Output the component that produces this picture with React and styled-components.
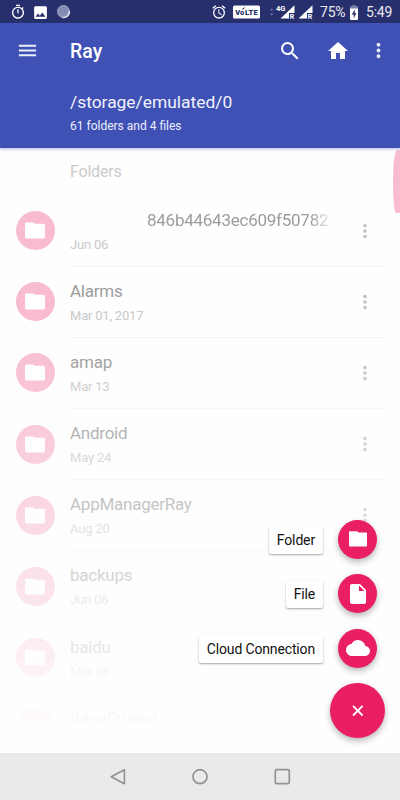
import styled, { createGlobalStyle } from "styled-components";
import {
    MdOutlineTimer,
    MdImage,
    MdOutlineAlarm,
    MdMenu,
    MdSearch,
    MdHome,
    MdMoreVert,
    MdInsertDriveFile,
    MdCloud,
} from "react-icons/md";

const GlobalStyle = createGlobalStyle`
    * {
        box-sizing: border-box;
    }
    body {
        margin: 0;
        font-family: Roboto, "Liberation Sans", sans-serif;
    }
    svg {
        display: block;
        flex: none;
    }
`;

const Screen = styled.div`
    display: flex;
    flex-direction: column;
    width: 400px;
    height: 800px;
    overflow: hidden;
    background: #fdfdfd;
`;

const StatusBar = styled.div`
    display: flex;
    align-items: center;
    justify-content: space-between;
    height: 23px;
    padding: 1px 8px 0 9.5px;
    background: #27306c;
    color: #fff;
`;

const StatusLeft = styled.div`
    display: flex;
    align-items: center;
    gap: 6.5px;
`;

const StatusRight = styled.div`
    display: flex;
    align-items: center;
`;

const StatusItem = styled.div`
    margin-left: ${(p) => p.$gap}px;
`;

const StatusText = styled.span`
    width: 26px;
    margin-left: ${(p) => p.$gap}px;
    font-size: 14px;
    line-height: 22px;
    letter-spacing: -0.2px;
    white-space: nowrap;
    color: #e9eaf2;
`;

const Header = styled.header`
    position: relative;
    z-index: 1;
    height: 125px;
    flex: none;
    background: #3f51b5;
    color: #fff;
    box-shadow: 0 1px 3px rgba(63, 81, 181, 0.4);
`;

const Toolbar = styled.div`
    display: flex;
    align-items: center;
    height: 55px;
    padding: 0 10px 0 16px;
    color: #eceefa;
`;

const Title = styled.h1`
    flex: 1;
    margin: 2px 0 0 31px;
    font-size: 19.5px;
    font-weight: 500;
    color: #fff;
`;

const Actions = styled.div`
    display: flex;
    align-items: center;
    gap: 23.5px;
    margin-right: 17.5px;
    color: #fff;
`;

const PathInfo = styled.div`
    padding: 12px 0 0 70px;
`;

const Path = styled.div`
    font-size: 17.4px;
    line-height: 24px;
    color: #f2f3fb;
`;

const Summary = styled.div`
    margin-top: 4px;
    font-size: 12px;
    line-height: 17px;
    color: #eceefa;
`;

const Content = styled.main`
    position: relative;
    height: 605px;
    flex: none;
    overflow: hidden;
    background: #fefefe;
`;

const SectionTitle = styled.div`
    height: 47.5px;
    padding: 14px 0 0 70px;
    font-size: 16px;
    line-height: 20px;
    letter-spacing: -0.2px;
    color: #cbcbcb;
`;

const Row = styled.div`
    display: flex;
    height: 71.2px;
    padding: 0 16px 0 15.5px;
`;

const Avatar = styled.div`
    display: flex;
    align-items: center;
    justify-content: center;
    width: 39px;
    height: 39px;
    margin: 15.5px 15.5px 0 0;
    border-radius: 50%;
    background: #f8bbd0;
    color: #fff;
`;

const RowBody = styled.div`
    display: flex;
    flex: 1;
    border-bottom: 1px solid #f3f3f3;
`;

const RowText = styled.div`
    width: 262px;
    padding-top: 12px;
`;

const Name = styled.div`
    padding-left: ${(p) => (p.$scrolling ? 77 : 0)}px;
    font-size: 17px;
    line-height: 24px;
    letter-spacing: -0.25px;
    white-space: nowrap;
    color: #9c9c9c;
    ${(p) => p.$scrolling && "mask-image: linear-gradient(to right, #000 240px, rgba(0, 0, 0, 0.2) 260px);"}
`;

const Date = styled.div`
    margin-top: 4px;
    font-size: 13px;
    line-height: 18px;
    letter-spacing: -0.2px;
    color: #c9c9c9;
`;

const More = styled.div`
    margin: 24px 0 0 21.5px;
    color: #c4c4c4;
`;

//White fade that covers the list while the menu is open
const Scrim = styled.div`
    position: absolute;
    inset: 0;
    background: linear-gradient(to bottom, rgba(253, 253, 253, 0) 180px, rgba(253, 253, 253, 0.6) 437px, #fefefe 592px);
`;

const ScrollHandle = styled.div`
    position: absolute;
    top: 2px;
    right: 0;
    width: 7px;
    height: 63px;
    border-radius: 4px 0 0 3px / 32px 0 0 31px;
    background: #f8bbd0;
`;

const Fabs = styled.div`
    position: absolute;
    right: 15px;
    bottom: 15px;
    display: flex;
    flex-direction: column;
    align-items: flex-end;
    gap: 15.5px;
`;

const FabRow = styled.div`
    display: flex;
    align-items: center;
    gap: 15.5px;
    margin-right: 8px;
`;

const FabLabel = styled.div`
    height: 27px;
    margin-top: 2px;
    padding: 0 7.5px;
    border-radius: 2px;
    background: #fff;
    box-shadow: 0 1px 2px rgba(0, 0, 0, 0.36);
    font-size: 14px;
    line-height: 27px;
    letter-spacing: -0.15px;
    color: #111;
`;

const Fab = styled.div`
    display: flex;
    align-items: center;
    justify-content: center;
    width: ${(p) => p.$size}px;
    height: ${(p) => p.$size}px;
    border-radius: 50%;
    background: #e91e63;
    color: #fff;
    box-shadow: 0 3px 6px rgba(0, 0, 0, 0.28);
`;

const NavBar = styled.nav`
    display: flex;
    align-items: center;
    justify-content: center;
    gap: 58px;
    flex: 1;
    background: #eaeaea;
`;

const folders = [
    { name: "846b44643ec609f50782", date: "Jun 06", scrolling: true },
    { name: "Alarms", date: "Mar 01, 2017" },
    { name: "amap", date: "Mar 13" },
    { name: "Android", date: "May 24" },
    { name: "AppManagerRay", date: "Aug 20" },
    { name: "backups", date: "Jun 06" },
    { name: "baidu", date: "Mar 06" },
    { name: "BasePrinext", date: "" },
];

const Loading = () => (
    <svg width="16" height="16" viewBox="0 0 16 16">
        <circle cx="7.5" cy="7.5" r="6.5" fill="#8f96bd" />
        <circle cx="7.3" cy="7.3" r="5.4" fill="#858cb4" stroke="#a9aecb" strokeWidth="1" strokeDasharray="1 1" />
        <path d="M13.5 7A6 6 0 0 1 6.5 13.5" fill="none" stroke="#e4e6f1" strokeWidth="1.4" />
    </svg>
);

const VoLte = () => (
    <svg width="27" height="14" viewBox="0 0 27 14">
        <rect x="0" y="0.5" width="27" height="13" rx="1.5" fill="#fff" />
        <text x="2.2" y="9.8" fontSize="7.5" fontWeight="900" fill="#27306c">V</text>
        <text x="7" y="9.8" fontSize="7.5" fontWeight="900" fill="#27306c">o</text>
        <path d="M9.2 4.5L11.7 2.6" stroke="#27306c" strokeWidth="1" />
        <text x="12" y="9.8" fontSize="7.5" fontWeight="900" fill="#27306c" textLength="12.6">LTE</text>
    </svg>
);

const Signal = ({ label }) => (
    <svg width={label ? 26 : 15} height="16" viewBox={label ? "0 0 26 16" : "11 0 15 16"}>
        {label && (
            <>
                <path d="M1 6.5l1.7-2.2 1.7 2.2zM1 9.5l1.7 2.2 1.7-2.2z" fill="#6e76a6" />
                <text x="7" y="7" fontSize="7.6" fontWeight="700" fill="#fff">{label}</text>
            </>
        )}
        <path d="M25.5 1.2V9H20v5.5h-8.5z" fill="#fff" />
        <text x="20.8" y="14.6" fontSize="7" fontWeight="700" fill="#fff">R</text>
    </svg>
);

const Battery = () => (
    <svg width="8" height="15" viewBox="0 0 8 15">
        <path d="M2.4 0h3.2v1.3H8V4H0V1.3h2.4z" fill="#7a80a8" />
        <path d="M0 3.5h8V14q0 1-1 1H1q-1 0-1-1z" fill="#fff" />
        <path d="M4.8 4.5L1.8 9.4h1.9v3.8l2.8-5H4.8z" fill="#27306c" />
    </svg>
);

const FolderIcon = () => (
    <svg width="20" height="17" viewBox="0 0 20 17" fill="currentColor">
        <path d="M1.4 0.4h6.4q.7 0 1 .5l.7.9h8.9q1.6 0 1.6 1.6v11.4q0 1.7-1.7 1.7H1.7q-1.7 0-1.7-1.7V1.8Q0 .4 1.4.4z" />
    </svg>
);

const NewFolderIcon = () => (
    <svg width="18" height="16" viewBox="0 0 18 16" fill="currentColor">
        <path d="M.5.3h7.6q.4 0 .6.4l.5.9h8.1q.7 0 .7.7v12.4q0 .7-.7.7H.7q-.7 0-.7-.7V.8Q0 .3.5.3z" />
    </svg>
);

const CloseIcon = () => (
    <svg width="18" height="18" viewBox="0 0 18 18" stroke="currentColor" strokeWidth="1.8">
        <path d="M4 3.9l9.6 9.6M13.6 3.9L4 13.5" />
    </svg>
);

const BackIcon = () => (
    <svg width="24" height="24" viewBox="0 0 24 24" fill="none" stroke="#929292" strokeWidth="1.6" strokeLinejoin="round">
        <path d="M18.4 4.7v14L5.2 11.7z" />
    </svg>
);

const HomeIcon = () => (
    <svg width="24" height="24" viewBox="0 0 24 24" fill="none" stroke="#929292" strokeWidth="1.7">
        <circle cx="12" cy="11.7" r="7" />
    </svg>
);

const RecentIcon = () => (
    <svg width="24" height="24" viewBox="0 0 24 24" fill="none" stroke="#929292" strokeWidth="1.7">
        <rect x="5.3" y="4.7" width="14" height="14" rx="1.5" />
    </svg>
);

const FolderRow = ({ folder }) => (
    <Row>
        <Avatar>
            <FolderIcon />
        </Avatar>
        <RowBody>
            <RowText>
                <Name $scrolling={folder.scrolling}>{folder.name}</Name>
                <Date>{folder.date}</Date>
            </RowText>
            <More>
                <MdMoreVert size={22} />
            </More>
        </RowBody>
    </Row>
);

const FabItem = ({ label, children }) => (
    <FabRow>
        <FabLabel>{label}</FabLabel>
        <Fab $size={39}>{children}</Fab>
    </FabRow>
);

const App = () => {
    return (
        <>
            <GlobalStyle />
            <Screen>
                <StatusBar>
                    <StatusLeft>
                        <MdOutlineTimer size={16} />
                        <MdImage size={17} />
                        <Loading />
                    </StatusLeft>
                    <StatusRight>
                        <MdOutlineAlarm size={16} />
                        <StatusItem $gap={6.5}>
                            <VoLte />
                        </StatusItem>
                        <StatusItem $gap={8.5}>
                            <Signal label="4G" />
                        </StatusItem>
                        <StatusItem $gap={3.5}>
                            <Signal />
                        </StatusItem>
                        <StatusText $gap={7}>75%</StatusText>
                        <StatusItem $gap={4}>
                            <Battery />
                        </StatusItem>
                        <StatusText $gap={8}>5:49</StatusText>
                    </StatusRight>
                </StatusBar>

                <Header>
                    <Toolbar>
                        <MdMenu size={23} />
                        <Title>Ray</Title>
                        <Actions>
                            <MdSearch size={24} />
                            <MdHome size={24} />
                        </Actions>
                        <MdMoreVert size={23} />
                    </Toolbar>
                    <PathInfo>
                        <Path>/storage/emulated/0</Path>
                        <Summary>61 folders and 4 files</Summary>
                    </PathInfo>
                </Header>

                <Content>
                    <SectionTitle>Folders</SectionTitle>
                    {folders.map((folder) => (
                        <FolderRow key={folder.name} folder={folder} />
                    ))}
                    <ScrollHandle />
                    <Scrim />
                    <Fabs>
                        <FabItem label="Folder">
                            <NewFolderIcon />
                        </FabItem>
                        <FabItem label="File">
                            <MdInsertDriveFile size={24} />
                        </FabItem>
                        <FabItem label="Cloud Connection">
                            <MdCloud size={24} />
                        </FabItem>
                        <Fab $size={55}>
                            <CloseIcon />
                        </Fab>
                    </Fabs>
                </Content>

                <NavBar>
                    <BackIcon />
                    <HomeIcon />
                    <RecentIcon />
                </NavBar>
            </Screen>
        </>
    );
};

export default App;
